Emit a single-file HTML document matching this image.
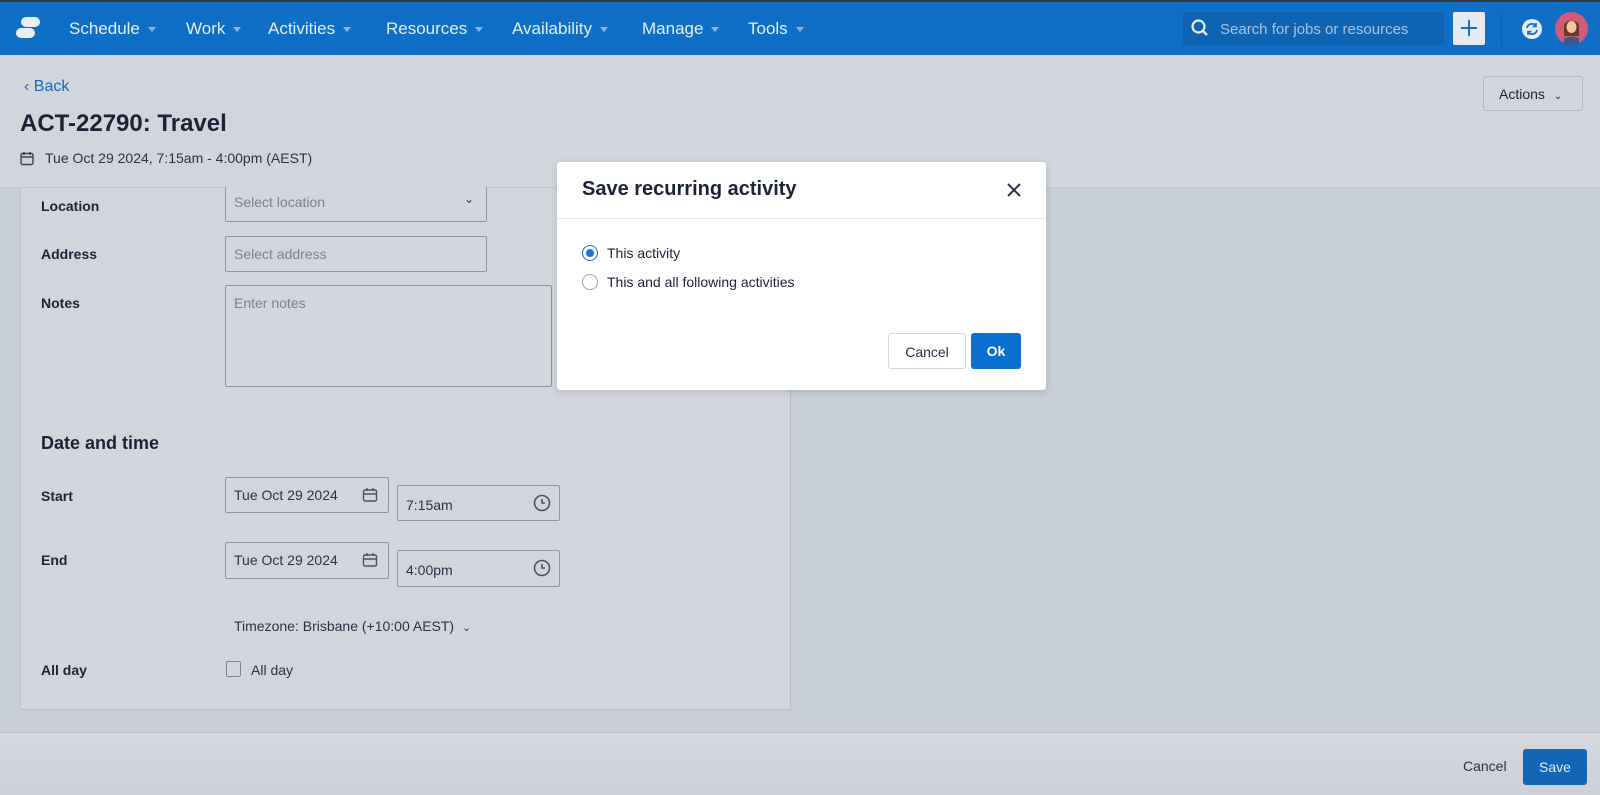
<!DOCTYPE html>
<html><head><meta charset="utf-8"><style>
*{box-sizing:border-box;margin:0;padding:0}
body{width:1600px;height:795px;overflow:hidden;background:#c8ced6;font-family:"Liberation Sans",sans-serif;color:#1b2337;position:relative}
.a{position:absolute}
.nav{left:0;top:0;width:1600px;height:55px;background:#0f6fc6;border-top:2px solid #3a3a3e}
.ni{top:17px;font-size:17px;color:#e6edf7;white-space:nowrap}
.ni:after{content:"";display:inline-block;margin-left:8px;vertical-align:middle;border:4px solid transparent;border-top:5px solid #8fb4e0;border-bottom:0}
.hdr{left:0;top:55px;width:1600px;height:133px;background:#d2d6dc;border-bottom:1px solid #bfc5cd}
.card{left:20px;top:188px;width:771px;height:522px;background:#d2d6dc;border:1px solid #b9bfc7;border-top:0}
.lbl{font-size:14px;font-weight:bold;color:#1b2337}
.inp{border:1px solid #8f96a2;border-radius:2px;background:#d2d6dc;font-size:14px;color:#7b8290;padding-left:8px}
.val{color:#2a3245}
.foot{left:0;top:732px;width:1600px;height:63px;background:linear-gradient(#d4d8de,#cdd1d7);border-top:1px solid #bcc2ca}
.modal{left:557px;top:162px;width:489px;height:228px;background:#fff;border-radius:3px;box-shadow:0 2px 8px rgba(0,0,0,.15)}
</style></head><body>
<div class="a nav">
 <svg class="a" style="left:16px;top:14px" width="24" height="24" viewBox="0 0 24 24"><rect x="5" y="1" width="19" height="10" rx="5" fill="#e9eef6"/><rect x="0" y="12" width="19" height="10" rx="5" fill="#e9eef6"/></svg>
 <div class="a ni" style="left:69px">Schedule</div>
 <div class="a ni" style="left:186px">Work</div>
 <div class="a ni" style="left:268px">Activities</div>
 <div class="a ni" style="left:386px">Resources</div>
 <div class="a ni" style="left:512px">Availability</div>
 <div class="a ni" style="left:642px">Manage</div>
 <div class="a ni" style="left:748px">Tools</div>
 <div class="a" style="left:1183px;top:10px;width:261px;height:33px;background:#0e64b3;border-radius:2px"></div>
 <svg class="a" style="left:1190px;top:16px" width="20" height="20" viewBox="0 0 20 20"><circle cx="8.5" cy="8.5" r="6" fill="none" stroke="#e6edf7" stroke-width="2.2"/><path d="M13 13l4 4" stroke="#e6edf7" stroke-width="2.4"/></svg>
 <div class="a" style="left:1220px;top:19px;font-size:15px;color:#a9c3e3">Search for jobs or resources</div>
 <div class="a" style="left:1453px;top:10px;width:32px;height:33px;background:#e6ebf2;border-radius:2px"></div>
 <svg class="a" style="left:1459px;top:16px" width="20" height="20"><path d="M10 2v16M2 10h16" stroke="#1a6fc4" stroke-width="2"/></svg>
 <div class="a" style="left:1501px;top:12px;width:1px;height:32px;background:#0d5fac"></div>
 <svg class="a" style="left:1522px;top:17px" width="20" height="20" viewBox="0 0 20 20"><circle cx="10" cy="10" r="10" fill="#e6edf7"/><path d="M5 9a5 5 0 0 1 9-2M15 11a5 5 0 0 1-9 2" stroke="#0f6fc6" stroke-width="1.8" fill="none"/><path d="M14 4v3.5h-3.5M6 16v-3.5h3.5" stroke="#0f6fc6" stroke-width="1.6" fill="none"/></svg>
 <svg class="a" style="left:1555px;top:10px" width="33" height="33" viewBox="0 0 33 33"><circle cx="16.5" cy="16.5" r="16.5" fill="#d05a78"/><path d="M9 14c0-7 15-7 15 0v10h-15z" fill="#6b3a22"/><ellipse cx="16.5" cy="15" rx="5" ry="6" fill="#f2c7a5"/><path d="M9 33v-6c0-3 15-3 15 0v6z" fill="#3b5a8a"/></svg>
</div>
<div class="a hdr">
 <div class="a" style="left:24px;top:23px;font-size:16px;color:#1a67bd">‹ Back</div>
 <div class="a" style="left:20px;top:55px;font-size:24px;font-weight:bold;color:#1b2337">ACT-22790: Travel</div>
 <svg class="a" style="left:20px;top:96px" width="14" height="15" viewBox="0 0 14 15"><rect x="1" y="2.5" width="12" height="11" rx="1.5" fill="none" stroke="#3a4254" stroke-width="1.4"/><path d="M1 6h12M4 1v3M10 1v3" stroke="#3a4254" stroke-width="1.4"/></svg>
 <div class="a" style="left:45px;top:95px;font-size:14px;color:#2a3245">Tue Oct 29 2024, 7:15am - 4:00pm (AEST)</div>
 <div class="a" style="left:1483px;top:21px;width:100px;height:35px;border:1px solid #b3b9c2;border-radius:3px;font-size:14px;color:#1b2337;padding:9px 0 0 15px">Actions <span style="font-size:10px;margin-left:5px">&#8964;</span></div>
</div>
<div class="a card">
 <div class="a lbl" style="left:20px;top:10px">Location</div>
 <div class="a inp" style="left:204px;top:-2px;width:262px;height:36px;border-top:0;padding-top:8px">Select location<span class="a" style="right:12px;top:6px;color:#2a3245;font-size:12px">&#8964;</span></div>
 <div class="a lbl" style="left:20px;top:58px">Address</div>
 <div class="a inp" style="left:204px;top:48px;width:262px;height:36px;padding-top:9px">Select address</div>
 <div class="a lbl" style="left:20px;top:107px">Notes</div>
 <div class="a inp" style="left:204px;top:97px;width:327px;height:102px;padding-top:9px">Enter notes</div>
 <div class="a" style="left:20px;top:245px;font-size:18px;font-weight:bold">Date and time</div>
 <div class="a lbl" style="left:20px;top:300px">Start</div>
 <div class="a inp val" style="left:204px;top:289px;width:164px;height:36px;padding-top:9px">Tue Oct 29 2024</div>
 <div class="a inp val" style="left:376px;top:297px;width:163px;height:36px;padding-top:11px">7:15am</div>
 <div class="a lbl" style="left:20px;top:364px">End</div>
 <div class="a inp val" style="left:204px;top:354px;width:164px;height:37px;padding-top:9px">Tue Oct 29 2024</div>
 <div class="a inp val" style="left:376px;top:362px;width:163px;height:37px;padding-top:11px">4:00pm</div>
 <div class="a" style="left:213px;top:430px;font-size:14px;color:#2a3245">Timezone: Brisbane (+10:00 AEST) <span style="font-size:11px;margin-left:4px">&#8964;</span></div>
 <div class="a lbl" style="left:20px;top:474px">All day</div>
 <div class="a" style="left:205px;top:473px;width:15px;height:16px;border:1px solid #7e8592;border-radius:2px"></div>
 <div class="a" style="left:230px;top:474px;font-size:14px;color:#2a3245">All day</div>
</div>
<svg class="a" style="left:362px;top:487px" width="16" height="16" viewBox="0 0 16 16"><rect x="1.5" y="3" width="13" height="11" rx="1.5" fill="none" stroke="#4a5264" stroke-width="1.4"/><path d="M1.5 7h13M5 1v3M11 1v3" stroke="#4a5264" stroke-width="1.4"/></svg>
<svg class="a" style="left:362px;top:552px" width="16" height="16" viewBox="0 0 16 16"><rect x="1.5" y="3" width="13" height="11" rx="1.5" fill="none" stroke="#4a5264" stroke-width="1.4"/><path d="M1.5 7h13M5 1v3M11 1v3" stroke="#4a5264" stroke-width="1.4"/></svg>
<svg class="a" style="left:533px;top:494px" width="18" height="18" viewBox="0 0 18 18"><circle cx="9" cy="9" r="7.5" fill="none" stroke="#4a5264" stroke-width="1.6"/><path d="M9 5v4h3" fill="none" stroke="#4a5264" stroke-width="1.6"/></svg>
<svg class="a" style="left:533px;top:559px" width="18" height="18" viewBox="0 0 18 18"><circle cx="9" cy="9" r="7.5" fill="none" stroke="#4a5264" stroke-width="1.6"/><path d="M9 5v4h3" fill="none" stroke="#4a5264" stroke-width="1.6"/></svg>
<div class="a foot">
 <div class="a" style="left:1463px;top:25px;font-size:14px;color:#2a3245">Cancel</div>
 <div class="a" style="left:1523px;top:16px;width:64px;height:36px;background:#1565b5;border-radius:3px;color:#e3ebf5;font-size:14px;text-align:center;padding-top:10px">Save</div>
</div>
<div class="a modal">
 <div class="a" style="left:25px;top:16px;font-size:20px;font-weight:bold;color:#1b2337">Save recurring activity</div>
 <svg class="a" style="left:449px;top:20px" width="16" height="16"><path d="M2 2l12 12M14 2L2 14" stroke="#2a3245" stroke-width="2"/></svg>
 <div class="a" style="left:0;top:56px;width:489px;height:1px;background:#e3e6eb"></div>
 <div class="a" style="left:25px;top:83px;width:16px;height:16px;border-radius:50%;border:1px solid #1a73d9;background:radial-gradient(#1a73d9 3.5px,#fff 4.5px)"></div>
 <div class="a" style="left:50px;top:83px;font-size:14px">This activity</div>
 <div class="a" style="left:25px;top:112px;width:16px;height:16px;border-radius:50%;border:1px solid #9aa0aa"></div>
 <div class="a" style="left:50px;top:112px;font-size:14px">This and all following activities</div>
 <div class="a" style="left:331px;top:171px;width:78px;height:36px;border:1px solid #d5d9df;border-radius:3px;font-size:14px;text-align:center;padding-top:10px;color:#2a3245">Cancel</div>
 <div class="a" style="left:414px;top:171px;width:50px;height:36px;background:#0a6fd1;border-radius:3px;font-size:14px;text-align:center;padding-top:10px;color:#fff;font-weight:bold">Ok</div>
</div>
</body></html>
